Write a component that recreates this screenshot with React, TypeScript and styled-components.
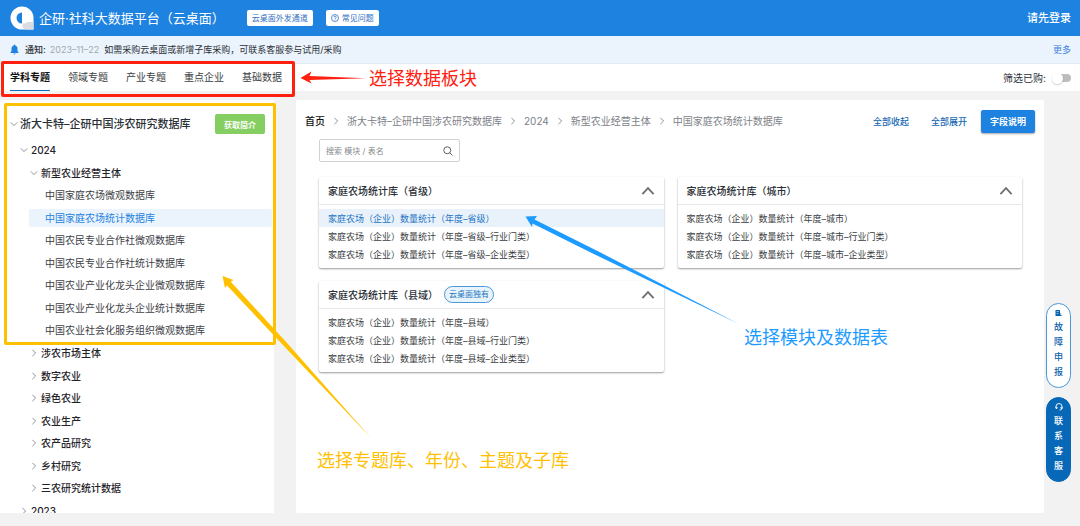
import React from "react";
import styled, { createGlobalStyle } from "styled-components";

const GlobalStyle = createGlobalStyle`
  *, *::before, *::after { box-sizing: border-box; }
  body {
    margin: 0;
    background: #f2f2f2;
    color: #2b2f36;
    font-family: Inter, "Noto Sans CJK SC", sans-serif;
    font-size: 10px;
    line-height: 16px;
  }
  button, input { font-family: inherit; }
  ul, ol { list-style: none; margin: 0; padding: 0; }
  h1, h2, h3, p { margin: 0; }
  a { color: inherit; text-decoration: none; }
`;

const Shell = styled.div`
  position: relative;
  display: flex;
  flex-direction: column;
  height: 100vh;
  overflow: hidden;
`;

const Header = styled.header`
  display: flex;
  align-items: center;
  flex: none;
  height: 36px;
  padding: 0 9px;
  background: #1e82e0;
  color: #fff;
`;

const Title = styled.h1`
  margin: 0 22px 0 4px;
  font-size: 13px;
  font-weight: 400;
  line-height: 20px;
  white-space: nowrap;
`;

const HeaderButton = styled.button`
  display: flex;
  align-items: center;
  gap: 3px;
  height: 16px;
  margin-right: 13px;
  padding: 0 5px;
  border: 0;
  border-radius: 2px;
  background: #fff;
  color: #2f6fc4;
  font-size: 8px;
  line-height: 16px;
  white-space: nowrap;
`;

const LoginLink = styled.a`
  margin-left: auto;
  font-size: 11px;
  font-weight: 500;
`;

const Notice = styled.div`
  display: flex;
  align-items: center;
  flex: none;
  height: 28px;
  padding: 0 9px 0 10px;
  border-bottom: 1px solid #e4ebf2;
  background: #ebf4fc;
  font-size: 9px;
`;

const NoticeLabel = styled.strong`
  margin: 0 4px 0 6px;
  font-weight: 500;
`;

const NoticeDate = styled.time`
  margin-right: 5px;
  color: #a3a8ad;
`;

const MoreLink = styled.a`
  margin-left: auto;
  color: #3b82d8;
`;

const TabBar = styled.div`
  display: flex;
  align-items: center;
  justify-content: space-between;
  flex: none;
  height: 27px;
  padding: 0 9px 0 10px;
  background: #fff;
`;

const Tabs = styled.nav`
  display: flex;
  gap: 18px;
  height: 27px;
`;

const Tab = styled.a<{ $active?: boolean }>`
  padding-top: 5px;
  border-bottom: ${(p) => (p.$active ? "1px solid #0b6fc0" : "0")};
  color: ${(p) => (p.$active ? "#111" : "#3a3d42")};
  font-weight: ${(p) => (p.$active ? 700 : 400)};
`;

const FilterLabel = styled.label`
  display: flex;
  align-items: center;
  gap: 6px;
`;

const Switch = styled.input`
  appearance: none;
  position: relative;
  width: 19px;
  height: 8px;
  margin: 0;
  border-radius: 4px;
  background: linear-gradient(to right, transparent 5px, #bdbdbd 5px);

  &::before {
    content: "";
    position: absolute;
    top: -1px;
    left: 0;
    width: 11px;
    height: 11px;
    border-radius: 50%;
    background: #fff;
    box-shadow: 0 1px 2px rgba(0, 0, 0, 0.2);
  }
`;

const Workspace = styled.div`
  display: flex;
  flex: 1;
  gap: 22px;
  min-height: 0;
  padding: 9px 36px 13px 0;
`;

const Sidebar = styled.aside`
  flex: none;
  width: 274px;
  overflow: hidden;
  background: #fff;
`;

const SidebarHead = styled.div`
  display: flex;
  align-items: center;
  height: 39px;
  padding: 9px 9px 0 10px;
`;

const SidebarTitle = styled.h2`
  margin-left: 2px;
  font-size: 11px;
  font-weight: 500;
  white-space: nowrap;
`;

const IntroButton = styled.button`
  width: 50px;
  height: 20px;
  margin-left: auto;
  padding: 0;
  border: 0;
  border-radius: 2px;
  background: #85ce61;
  color: #fff;
  font-size: 8px;
  font-weight: 700;
`;

const Tree = styled.ul`
  display: grid;
  grid-auto-rows: 1fr;
  height: 383px;
`;

const TreeRow = styled.li<{ $level: number; $selected?: boolean }>`
  display: flex;
  align-items: center;
  gap: 3px;
  margin: 2px 2px 2px ${(p) => [20, 30, 29][p.$level]}px;
  padding-left: ${(p) => (p.$level === 2 ? 16 : 0)}px;
  border-radius: 2px;
  background: ${(p) => (p.$selected ? "#ebf4fc" : "transparent")};
  color: ${(p) => (p.$selected ? "#1e82e0" : p.$level === 2 ? "#3c4046" : "#1f2329")};
  font-weight: ${(p) => (p.$level === 2 ? 400 : 500)};
`;

const Main = styled.main`
  flex: 1;
  min-width: 0;
  padding: 9px 9px 0;
  border-radius: 2px;
  background: #fff;
`;

const TopLine = styled.div`
  display: flex;
  align-items: center;
  height: 24px;
`;

const Crumbs = styled.ol`
  display: flex;
  align-items: center;
  gap: 7px;
  margin-right: auto;
  color: #7d8187;
  white-space: nowrap;
`;

const Crumb = styled.li<{ $home?: boolean }>`
  display: flex;
  align-items: center;
  gap: 7px;
  color: ${(p) => (p.$home ? "#111" : "inherit")};
  font-weight: ${(p) => (p.$home ? 500 : 400)};
`;

const TextButton = styled.button`
  margin-right: 22px;
  padding: 0;
  border: 0;
  background: none;
  color: #1668b3;
  font-size: 9px;
  font-weight: 500;
`;

const PrimaryButton = styled.button`
  width: 54px;
  height: 23px;
  margin-left: -8px;
  padding: 0;
  border: 0;
  border-radius: 2px;
  background: #1e82e0;
  box-shadow: 0 1px 2px rgba(0, 0, 0, 0.35);
  color: #fff;
  font-size: 9px;
  font-weight: 700;
`;

const SearchBox = styled.div`
  display: flex;
  align-items: center;
  width: 141px;
  height: 23px;
  margin: 6px 0 15px 14px;
  padding: 0 6px;
  border: 1px solid #cfd1d4;
  border-radius: 2px;
`;

const SearchInput = styled.input`
  flex: 1;
  min-width: 0;
  padding: 0;
  border: 0;
  outline: 0;
  background: none;
  font-size: 8px;

  &::placeholder { color: #85888c; opacity: 1; }
`;

const Cards = styled.div`
  display: grid;
  grid-template-columns: 1fr 1fr;
  gap: 13px 14px;
  padding: 0 13px 0 14px;
`;

const Card = styled.section`
  height: 91px;
  border-radius: 2px;
  background: #fff;
  box-shadow: 0 1px 2px rgba(0, 0, 0, 0.4);
`;

const CardHead = styled.div`
  display: flex;
  align-items: center;
  height: 28px;
  padding: 0 9px;
  border-bottom: 1px solid #e9e9e9;
`;

const CardTitle = styled.h3`
  font-size: 10px;
  font-weight: 500;
`;

const Badge = styled.span`
  height: 17px;
  margin-left: 6px;
  padding: 0 4px;
  border: 1px solid #4a98d8;
  border-radius: 9px;
  background: #e9f3fc;
  color: #1a73c0;
  font-size: 8px;
  line-height: 15px;
`;

const Toggle = styled.button`
  display: flex;
  margin-left: auto;
  padding: 0;
  border: 0;
  background: none;
`;

const TableList = styled.ul`
  padding-top: 4px;
  font-size: 9px;
`;

const TableItem = styled.li<{ $selected?: boolean }>`
  padding: 1px 9px 0;
  background: ${(p) => (p.$selected ? "#e9f2fa" : "transparent")};
  color: ${(p) => (p.$selected ? "#1e74c4" : "#3a3d42")};
  line-height: 17px;
`;

const FloatingTools = styled.div`
  position: absolute;
  top: 303px;
  right: 9px;
  display: flex;
  flex-direction: column;
  gap: 9px;
`;

const FloatingButton = styled.button<{ $solid?: boolean }>`
  display: flex;
  flex-direction: column;
  align-items: center;
  gap: 2px;
  width: 25px;
  height: 85px;
  padding: 5px 7px 0;
  border: 1px solid ${(p) => (p.$solid ? "#0768b8" : "#4a98d8")};
  border-radius: 13px;
  background: ${(p) => (p.$solid ? "#0768b8" : "#fff")};
  color: ${(p) => (p.$solid ? "#fff" : "#0b62ac")};
  font-size: 9px;
  font-weight: 500;
  line-height: 15px;
`;

const Annotations = styled.div`
  position: absolute;
  inset: 0;
  pointer-events: none;
`;

const Outline = styled.div<{ $x: number; $y: number; $w: number; $h: number; $color: string }>`
  position: absolute;
  left: ${(p) => p.$x}px;
  top: ${(p) => p.$y}px;
  width: ${(p) => p.$w}px;
  height: ${(p) => p.$h}px;
  border: 3px solid ${(p) => p.$color};
  border-radius: 2px;
`;

const Arrows = styled.svg`
  position: absolute;
  top: 0;
  left: 0;
`;

const Note = styled.p<{ $x: number; $y: number; $color: string }>`
  position: absolute;
  left: ${(p) => p.$x}px;
  top: ${(p) => p.$y}px;
  color: ${(p) => p.$color};
  font-family: "Noto Sans CJK SC", sans-serif;
  font-size: 18px;
  line-height: 26px;
  white-space: nowrap;
`;

type ChevronProps = { dir: "up" | "down" | "right"; size?: number; color?: string; stroke?: number };

const chevronPaths = {
  up: "M1 7.3 5 3l4 4.3",
  down: "M1 3l4 4 4-4",
  right: "M3 1l4 4-4 4",
};

const Chevron = ({ dir, size = 8, color = "#8a8d91", stroke = 1.2 }: ChevronProps) => (
  <svg width={size} height={size} viewBox="0 0 10 10" fill="none" stroke={color} strokeWidth={stroke} aria-hidden="true">
    <path d={chevronPaths[dir]} />
  </svg>
);

const Logo = () => (
  <svg width="26" height="26" viewBox="0 0 26 26" aria-hidden="true">
    <path d="M13 1.500A11.500 11.500 0 1 0 13 24.500H24.500V13A11.500 11.500 0 0 0 13 1.500Z" fill="#fff" />
    <path d="M13.500 18.500Q17 18.500 18.500 17H24.500V24.500H17Q13.500 24 13.500 21Z" fill="#d9dde2" />
    <path d="M13 7.500A5.500 5.500 0 0 0 13 18.500Z" fill="#1e82e0" />
  </svg>
);

const tabs = ["学科专题", "领域专题", "产业专题", "重点企业", "基础数据"];

type Node = { label: string; level: number; open?: boolean; selected?: boolean };

const nodes: Node[] = [
  { label: "2024", level: 0, open: true },
  { label: "新型农业经营主体", level: 1, open: true },
  { label: "中国家庭农场微观数据库", level: 2 },
  { label: "中国家庭农场统计数据库", level: 2, selected: true },
  { label: "中国农民专业合作社微观数据库", level: 2 },
  { label: "中国农民专业合作社统计数据库", level: 2 },
  { label: "中国农业产业化龙头企业微观数据库", level: 2 },
  { label: "中国农业产业化龙头企业统计数据库", level: 2 },
  { label: "中国农业社会化服务组织微观数据库", level: 2 },
  { label: "涉农市场主体", level: 1 },
  { label: "数字农业", level: 1 },
  { label: "绿色农业", level: 1 },
  { label: "农业生产", level: 1 },
  { label: "农产品研究", level: 1 },
  { label: "乡村研究", level: 1 },
  { label: "三农研究统计数据", level: 1 },
  { label: "2023", level: 0 },
];

const crumbs = ["首页", "浙大卡特–企研中国涉农研究数据库", "2024", "新型农业经营主体", "中国家庭农场统计数据库"];

const cards = [
  { region: "省级", selected: 0 },
  { region: "城市", selected: -1 },
  { region: "县域", selected: -1, badge: "云桌面独有" },
];

const suffixes = ["", "–行业门类", "–企业类型"];

export default function App() {
  return (
    <Shell>
      <GlobalStyle />
      <Header>
        <Logo />
        <Title>企研·社科大数据平台（云桌面）</Title>
        <HeaderButton type="button">云桌面外发通道</HeaderButton>
        <HeaderButton type="button">
          <svg width="8" height="8" viewBox="0 0 16 16" fill="none" stroke="#2f6fc4" strokeWidth="1.6" aria-hidden="true">
            <circle cx="8" cy="8" r="7" />
            <path d="M5.800 6.500a2.200 2.200 0 1 1 3.200 2C8.300 8.900 8 9.200 8 10M8 11v1.500" />
          </svg>
          常见问题
        </HeaderButton>
        <LoginLink href="#login">请先登录</LoginLink>
      </Header>

      <Notice>
        <svg width="9" height="11" viewBox="0 0 18 22" fill="#1e82e0" aria-hidden="true">
          <path d="M9 1a1.500 1.500 0 0 0-1.500 1.500v.7C4.500 4 3 6.500 3 9.500V14l-2 3v1h16v-1l-2-3V9.500c0-3-1.500-5.500-4.500-6.300v-.7A1.500 1.500 0 0 0 9 1ZM7 19a2 2 0 0 0 4 0Z" />
        </svg>
        <NoticeLabel>通知:</NoticeLabel>
        <NoticeDate dateTime="2023-11-22">2023–11–22</NoticeDate>
        <span>如需采购云桌面或新增子库采购，可联系客服参与试用/采购</span>
        <MoreLink href="#more">更多</MoreLink>
      </Notice>

      <TabBar>
        <Tabs>
          {tabs.map((tab, i) => (
            <Tab key={tab} href="#tab" $active={i === 0}>{tab}</Tab>
          ))}
        </Tabs>
        <FilterLabel>
          筛选已购:
          <Switch type="checkbox" role="switch" />
        </FilterLabel>
      </TabBar>

      <Workspace>
        <Sidebar>
          <SidebarHead>
            <Chevron dir="down" />
            <SidebarTitle>浙大卡特–企研中国涉农研究数据库</SidebarTitle>
            <IntroButton type="button">获取简介</IntroButton>
          </SidebarHead>
          <Tree>
            {nodes.map((node) => (
              <TreeRow key={node.label} $level={node.level} $selected={node.selected}>
                {node.level < 2 && <Chevron dir={node.open ? "down" : "right"} />}
                {node.label}
              </TreeRow>
            ))}
          </Tree>
        </Sidebar>

        <Main>
          <TopLine>
            <Crumbs>
              {crumbs.map((crumb, i) => (
                <Crumb key={crumb} $home={i === 0}>
                  {i > 0 && <Chevron dir="right" />}
                  <a href="#crumb">{crumb}</a>
                </Crumb>
              ))}
            </Crumbs>
            <TextButton type="button">全部收起</TextButton>
            <TextButton type="button">全部展开</TextButton>
            <PrimaryButton type="button">字段说明</PrimaryButton>
          </TopLine>
          <SearchBox>
            <SearchInput type="text" placeholder="搜索 模块 / 表名" aria-label="搜索 模块 / 表名" />
            <svg width="10" height="10" viewBox="0 0 20 20" fill="none" stroke="#5f6368" strokeWidth="2" aria-hidden="true">
              <circle cx="8.500" cy="8.500" r="7" />
              <path d="m13.500 13.500 5.500 5.500" />
            </svg>
          </SearchBox>
          <Cards>
            {cards.map((card) => (
              <Card key={card.region}>
                <CardHead>
                  <CardTitle>家庭农场统计库（{card.region}）</CardTitle>
                  {card.badge && <Badge>{card.badge}</Badge>}
                  <Toggle type="button" aria-label="收起">
                    <Chevron dir="up" size={14} color="#707070" stroke={1.3} />
                  </Toggle>
                </CardHead>
                <TableList>
                  {suffixes.map((suffix, i) => (
                    <TableItem key={suffix} $selected={card.selected === i}>
                      家庭农场（企业）数量统计（年度–{card.region}{suffix}）
                    </TableItem>
                  ))}
                </TableList>
              </Card>
            ))}
          </Cards>
        </Main>
      </Workspace>

      <FloatingTools>
        <FloatingButton type="button">
          <svg width="7" height="8" viewBox="0 0 14 16" fill="#0b62ac" aria-hidden="true">
            <path d="M1 2h9v6h1v4h2v2H1ZM3 5v1.200h5V5ZM3 8v1.200h4V8Z" fillRule="evenodd" />
          </svg>
          故障申报
        </FloatingButton>
        <FloatingButton type="button" $solid>
          <svg width="8" height="8" viewBox="0 0 16 16" fill="none" stroke="#fff" strokeWidth="1.800" aria-hidden="true">
            <path d="M2 10V7a6 6 0 0 1 12 0v3c0 3-2 4-5 4M2 7v4h2V8M14 7v4h-2V8" />
          </svg>
          联系客服
        </FloatingButton>
      </FloatingTools>

      <Annotations>
        <Outline $x={1} $y={61} $w={294} $h={36} $color="#ff2010" />
        <Outline $x={4} $y={103} $w={272} $h={242} $color="#ffc000" />
        <Arrows width="760" height="440" viewBox="0 0 760 440" aria-hidden="true">
          <path d="M300.500 78 311.500 71.500 309.500 76 366 78.300 309.500 80 311.500 83.500Z" fill="#ff2010" />
          <path d="M525.500 216.500 537 216 534.500 219.500 601 252.800 739 324 599 256.600 532.500 223.500 532 227Z" fill="#1e9bff" />
          <path d="M222.500 276 233.500 280 230.800 281.800 286.600 342.500 371 438 283.400 345.500 227 285.500 225 288Z" fill="#ffc000" />
        </Arrows>
        <Note $x={369} $y={64} $color="#ff2010">选择数据板块</Note>
        <Note $x={744} $y={323} $color="#1e9bff">选择模块及数据表</Note>
        <Note $x={317} $y={446} $color="#ffc000">选择专题库、年份、主题及子库</Note>
      </Annotations>
    </Shell>
  );
}
